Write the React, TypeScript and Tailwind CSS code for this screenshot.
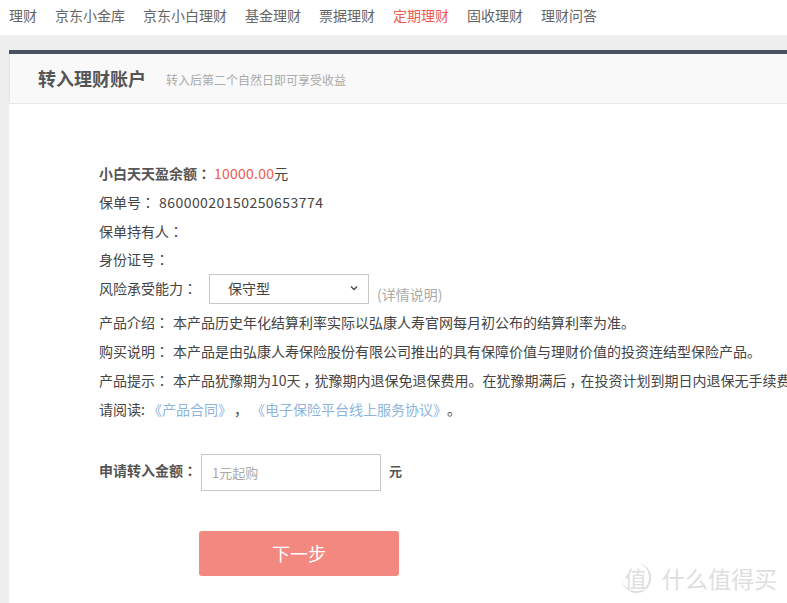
const font = { fontFamily: '"Noto Sans CJK SC", "Noto Sans", sans-serif' };
const tc = { fontFamily: '"Noto Sans CJK TC", sans-serif' };

const navItems = ["理财", "京东小金库", "京东小白理财", "基金理财", "票据理财", "定期理财", "固收理财", "理财问答"];

function P({ c }: { c: string }) {
  return <span style={tc}>{c}</span>;
}

function Comma() {
  return <span className="inline-block w-[14px] pl-[3px]">，</span>;
}

function Row({ label, children, bold, h = "h-[29px]" }: { label: string; children?: React.ReactNode; bold?: boolean; h?: string }) {
  return (
    <div className={`flex items-center whitespace-nowrap pb-[2px] ${h}`}>
      <span className={bold ? "font-bold text-[#555]" : ""}>
        {label}
        <P c="：" />
      </span>
      {children}
    </div>
  );
}

export default function App() {
  return (
    <div style={font} className="w-[787px] h-[603px] overflow-hidden bg-[#eeeeee] text-[14px] text-[#444] relative">
      <nav className="h-[35px] bg-white flex items-center gap-[18px] pl-[9px] pb-[4px] text-[#666]">
        {navItems.map((n) => (
          <span key={n} className={n === "定期理财" ? "text-[#f05a50]" : ""}>{n}</span>
        ))}
      </nav>
      <main className="mt-[15px] ml-[9px] w-[820px] border-t-4 border-[#4a5160] bg-white h-[560px]">
        <header className="h-[50px] bg-[#f9f9f9] border-b border-l border-[#e6e6e6] flex items-center pl-[28px]">
          <h1 className="text-[18px] font-bold text-[#555] w-[128px]">转入理财账户</h1>
          <span className="text-[12px] text-[#aaa] mt-[3px]">转入后第二个自然日即可享受收益</span>
        </header>
        <section className="pl-[90px] pt-[56px]">
          <Row label="小白天天盈余额" bold>
            <span className="text-[#f05a50] ml-[3px] tracking-[0.25px]">10000.00</span>
            <span>元</span>
          </Row>
          <Row label="保单号">
            <span className="ml-[4px] tracking-[0.45px]">86000020150250653774</span>
          </Row>
          <Row label="保单持有人" />
          <Row label="身份证号" h="h-[27px]" />
          <div className="flex items-start whitespace-nowrap h-[35px]">
            <span className="h-[28px] leading-[28px] w-[110px]">
              风险承受能力
              <P c="：" />
            </span>
            <div className="w-[160px] h-[30px] border border-[#c8c8c8] flex items-center justify-between pl-[18px] pr-[10px] pb-[2px]">
              <span>保守型</span>
              <svg width="8" height="6" viewBox="0 0 8 6">
                <path d="M1 1.5 L4 4.5 L7 1.5" fill="none" stroke="#444" strokeWidth="1.3" />
              </svg>
            </div>
            <span className="ml-[8px] mt-[10px] leading-[20px] text-[#aaa]">(详情说明)</span>
          </div>
          <Row label="产品介绍">
            <span className="ml-[4px]">本产品历史年化结算利率实际以弘康人寿官网每月初公布的结算利率为准。</span>
          </Row>
          <Row label="购买说明">
            <span className="ml-[4px]">本产品是由弘康人寿保险股份有限公司推出的具有保障价值与理财价值的投资连结型保险产品。</span>
          </Row>
          <Row label="产品提示">
            <span className="ml-[4px]">
              本产品犹豫期为10天
              <Comma />
              犹豫期内退保免退保费用。在犹豫期满后
              <Comma />
              在投资计划到期日内退保无手续费
            </span>
          </Row>
          <div className="flex items-center whitespace-nowrap h-[29px] pb-[2px]">
            <span>请阅读:</span>
            <span className="ml-[3px] text-[#8fb4dc]">《产品合同》</span>
            <span className="ml-[2px] mr-[3px]">，</span>
            <span className="text-[#8fb4dc]">《电子保险平台线上服务协议》</span>
            <span>。</span>
          </div>
          <div className="flex items-center h-[37px] mt-[29px]">
            <span className="font-bold text-[#555] w-[102px] pb-[4px]">
              申请转入金额
              <P c="：" />
            </span>
            <input
              readOnly
              placeholder="1元起购"
              className="w-[180px] h-[37px] border border-[#c8c8c8] pl-[10px] text-[13px] outline-none placeholder:text-[#aaa]"
            />
            <span className="ml-[8px] font-bold text-[13px] text-[#555] pb-[4px]">元</span>
          </div>
          <button className="mt-[40px] ml-[100px] block w-[200px] h-[45px] rounded-[3px] bg-[#f28880] text-white text-[18px]">
            下一步
          </button>
        </section>
      </main>
      <div className="absolute right-[10px] bottom-[10px] flex items-center gap-[11px] text-[#dedede] text-[23px] leading-none" style={{ textShadow: "1px 1px 1px rgba(255,255,255,.9)" }}>
        <span className="w-[29px] h-[30px] rounded-full border-r-2 border-b-2 border-[#dedede] flex items-center justify-center text-[22px]">值</span>
        <span>什么值得买</span>
      </div>
    </div>
  );
}
